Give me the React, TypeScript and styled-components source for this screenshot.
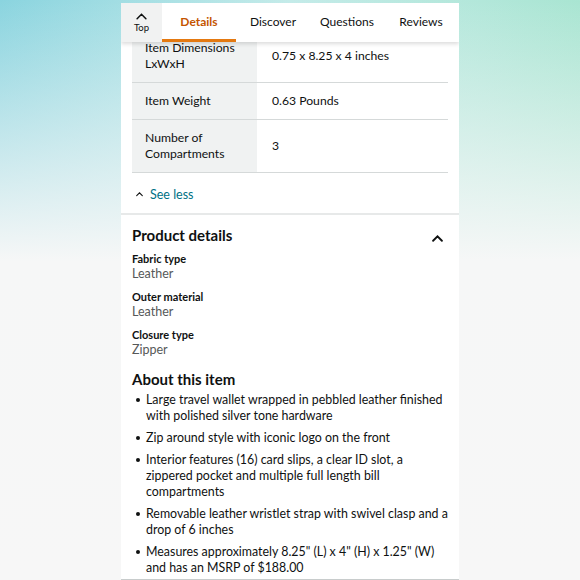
import styled, { createGlobalStyle } from 'styled-components'

const GlobalStyle = createGlobalStyle`
  html, body {
    margin: 0;
    padding: 0;
    overflow: hidden;
  }
  body {
    font-family: Lato, "Noto Sans", "Liberation Sans", sans-serif;
  }
`

const Backdrop = styled.div`
  width: 580px;
  height: 580px;
  display: flex;
  justify-content: center;
  background:
    linear-gradient(180deg, rgba(255, 255, 255, 0) 0%, #f6f7f7 45%, #f7f7f7 100%),
    linear-gradient(90deg, #8ad4df 0%, #c4ebe9 50%, #a9e5d2 100%);
`

const Phone = styled.div`
  width: 338px;
  margin-top: 3px;
  height: 577px;
  background: #fff;
  display: flex;
  flex-direction: column;
  overflow: hidden;
`

const TabBar = styled.div`
  position: relative;
  z-index: 2;
  display: flex;
  height: 39px;
  flex-shrink: 0;
  background: #fff;
  box-shadow: 0 2px 4px rgba(0, 0, 0, 0.14);
`

const TopButton = styled.div`
  width: 41px;
  background: #f1f2f2;
  display: flex;
  flex-direction: column;
  align-items: center;
  justify-content: center;
  gap: 2px;
  font-size: 9.5px;
  color: #0f1111;
  padding-top: 1px;
  box-sizing: border-box;
`

const Tab = styled.div<{ $active?: boolean }>`
  width: 74px;
  display: flex;
  align-items: center;
  justify-content: center;
  font-size: 12px;
  color: ${p => (p.$active ? '#c45500' : '#0f1111')};
  font-weight: ${p => (p.$active ? 700 : 400)};
  box-sizing: border-box;
  border-bottom: 3px solid ${p => (p.$active ? '#e47911' : 'transparent')};
  padding-top: 1px;
`

const Content = styled.div`
  margin-top: -12px;
  display: flex;
  flex-direction: column;
`

const Table = styled.div`
  margin: 0 11px;
  display: flex;
  flex-direction: column;
`

const Row = styled.div`
  display: grid;
  grid-template-columns: 125px 1fr;
  border-bottom: 1px solid #d5d9d9;
`

const KeyCell = styled.div`
  background: #f0f2f2;
  padding: 10px 10px 10px 13px;
  font-size: 12.2px;
  line-height: 16px;
  color: #0f1111;
  display: flex;
  align-items: center;
`

const ValueCell = styled.div`
  padding: 10px 12px 10px 15px;
  font-size: 12.2px;
  line-height: 16px;
  color: #0f1111;
  display: flex;
  align-items: center;
`

const FirstValue = styled(ValueCell)`
  align-items: flex-start;
  padding-top: 18px;
`

const SeeLess = styled.div`
  display: flex;
  align-items: center;
  gap: 7px;
  height: 40px;
  padding: 3px 0 0 15px;
  box-sizing: border-box;
  font-size: 12.5px;
  color: #007185;
`

const Divider = styled.div`
  height: 2px;
  background: #e7e9e9;
`

const Section = styled.div`
  padding: 10px 11px 0;
  display: flex;
  flex-direction: column;
`

const SectionHeader = styled.div`
  display: flex;
  justify-content: space-between;
  align-items: center;
`

const Heading = styled.h2`
  margin: 0;
  font-size: 15px;
  line-height: 20px;
  font-weight: 700;
  color: #0f1111;
`

const Chevron = styled.span`
  display: flex;
  margin: 7px 5px 0 0;
`

const Attr = styled.div`
  display: flex;
  flex-direction: column;
  margin-top: 6px;
  & + & {
    margin-top: 7px;
  }
`

const AttrLabel = styled.div`
  font-size: 11px;
  line-height: 15px;
  font-weight: 700;
  color: #0f1111;
`

const AttrValue = styled.div`
  font-size: 12.5px;
  line-height: 16px;
  color: #565959;
`

const AboutHeading = styled(Heading)`
  margin-top: 11px;
`

const Bullets = styled.ul`
  margin: 0;
  padding: 0 0 0 14px;
  list-style: none;
`

const Bullet = styled.li`
  position: relative;
  font-size: 12.4px;
  line-height: 16px;
  color: #0f1111;
  margin-top: 6px;
  &:first-child {
    margin-top: 3px;
  }
  &::before {
    content: '';
    position: absolute;
    left: -10px;
    top: 6px;
    width: 4px;
    height: 4px;
    border-radius: 50%;
    background: #0f1111;
  }
`

const BottomBar = styled.div`
  margin-top: 3px;
  height: 6px;
  border-top: 1px solid #c8cccc;
  border-left: 1px solid #c8cccc;
  border-right: 1px solid #c8cccc;
  display: flex;
  padding-left: 15px;
`

const BottomIndicator = styled.div`
  width: 35px;
  height: 3px;
  background: #0c7f8d;
`

const UpIcon = ({ size = 10, stroke = 1.6 }: { size?: number; stroke?: number }) => (
  <svg width={size} height={size * 0.6} viewBox="0 0 10 6" fill="none">
    <path d="M1 5.2L5 1.2L9 5.2" stroke="#0f1111" strokeWidth={stroke} strokeLinecap="round" />
  </svg>
)

const rows = [
  { key: 'Item Dimensions LxWxH', value: '0.75 x 8.25 x 4 inches' },
  { key: 'Item Weight', value: '0.63 Pounds' },
  { key: 'Number of Compartments', value: '3' },
]

const attrs = [
  { label: 'Fabric type', value: 'Leather' },
  { label: 'Outer material', value: 'Leather' },
  { label: 'Closure type', value: 'Zipper' },
]

const bullets = [
  'Large travel wallet wrapped in pebbled leather finished with polished silver tone hardware',
  'Zip around style with iconic logo on the front',
  'Interior features (16) card slips, a clear ID slot, a zippered pocket and multiple full length bill compartments',
  'Removable leather wristlet strap with swivel clasp and a drop of 6 inches',
  'Measures approximately 8.25" (L) x 4" (H) x 1.25" (W) and has an MSRP of $188.00',
]

export default function App() {
  return (
    <>
      <GlobalStyle />
      <Backdrop>
        <Phone>
          <TabBar>
            <TopButton>
              <UpIcon size={11} stroke={1.4} />
              <span>Top</span>
            </TopButton>
            <Tab $active>Details</Tab>
            <Tab>Discover</Tab>
            <Tab>Questions</Tab>
            <Tab>Reviews</Tab>
          </TabBar>
          <Content>
            <Table>
              {rows.map((r, i) => (
                <Row key={r.key}>
                  <KeyCell>{r.key}</KeyCell>
                  {i === 0 ? <FirstValue>{r.value}</FirstValue> : <ValueCell>{r.value}</ValueCell>}
                </Row>
              ))}
            </Table>
            <SeeLess>
              <UpIcon size={7} stroke={1.5} />
              <span>See less</span>
            </SeeLess>
            <Divider />
            <Section>
              <SectionHeader>
                <Heading>Product details</Heading>
                <Chevron>
                  <UpIcon size={11} stroke={1.7} />
                </Chevron>
              </SectionHeader>
              {attrs.map(a => (
                <Attr key={a.label}>
                  <AttrLabel>{a.label}</AttrLabel>
                  <AttrValue>{a.value}</AttrValue>
                </Attr>
              ))}
              <AboutHeading>About this item</AboutHeading>
              <Bullets>
                {bullets.map(b => (
                  <Bullet key={b}>{b}</Bullet>
                ))}
              </Bullets>
            </Section>
            <BottomBar>
              <BottomIndicator />
            </BottomBar>
          </Content>
        </Phone>
      </Backdrop>
    </>
  )
}
